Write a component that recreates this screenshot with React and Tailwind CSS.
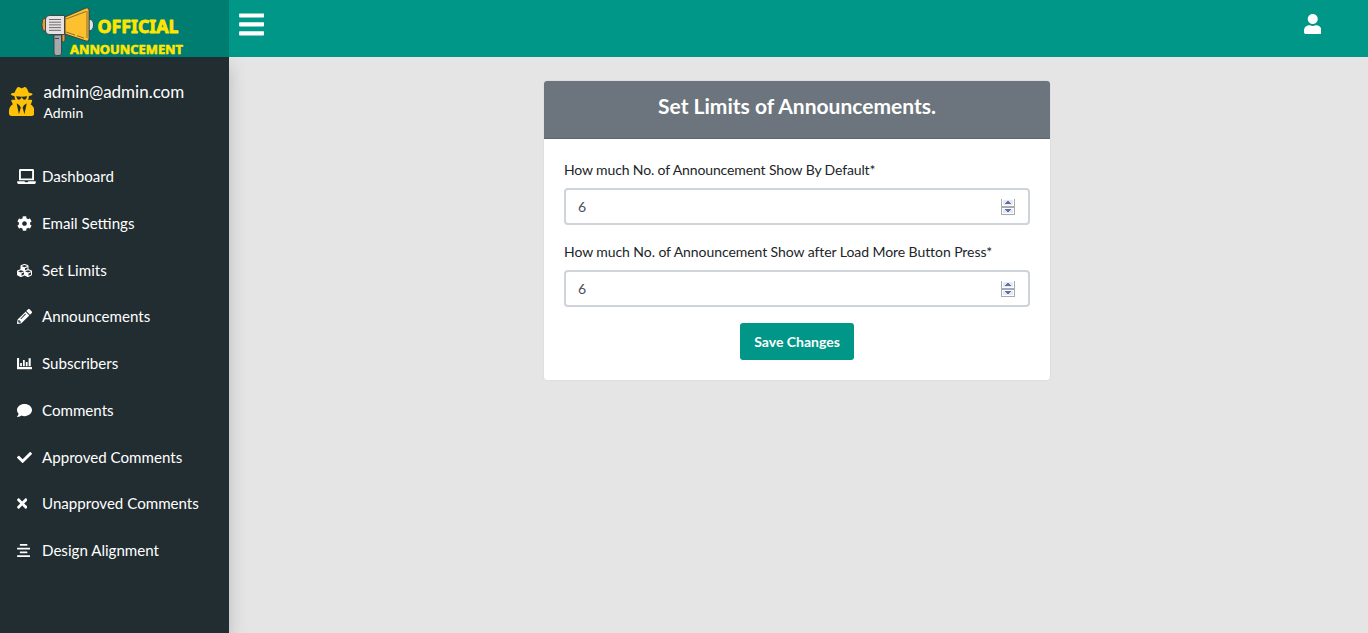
import React from "react";
import {
  FaLaptop, FaCog, FaCubes, FaPencilAlt, FaComment, FaCheck,
  FaTimes, FaAlignCenter, FaBars, FaUser, FaUserSecret,
} from "react-icons/fa";

function BarChart({ className }) {
  return (
    <svg viewBox="0 0 512 512" fill="currentColor" className={className}>
      <path d="M12 64H60Q72 64 72 76V376H500Q512 376 512 388V436Q512 448 500 448H12Q0 448 0 436V76Q0 64 12 64Z" />
      <path d="M108 236H168V346H108ZM204 140H264V346H204ZM300 204H360V346H300ZM396 76H468V346H396Z" />
    </svg>
  );
}

const items = [
  { label: "Dashboard", Icon: FaLaptop, size: "w-[19px]" },
  { label: "Email Settings", Icon: FaCog, size: "w-[15px]" },
  { label: "Set Limits", Icon: FaCubes, size: "w-[15px]" },
  { label: "Announcements", Icon: FaPencilAlt, size: "w-[15px]" },
  { label: "Subscribers", Icon: BarChart, size: "w-[15px]" },
  { label: "Comments", Icon: FaComment, size: "w-[15px]" },
  { label: "Approved Comments", Icon: FaCheck, size: "w-[15px]" },
  { label: "Unapproved Comments", Icon: FaTimes, size: "w-[10.4px]" },
  { label: "Design Alignment", Icon: FaAlignCenter, size: "w-[13.2px]" },
];

function Megaphone() {
  return (
    <svg width="54" height="50" viewBox="0 0 54 50" className="shrink-0" stroke="#3f3b3c" strokeWidth="0.9" strokeLinejoin="round">
      <path d="M6 11.5H3Q1 12 1 17.500Q1 23 3 24H6Z" fill="#e0a33c" />
      <path d="M21 27H24V34Q22 36 21 34Z" fill="#e0a33c" />
      <path d="M13 28H20.500V46Q20.500 48.500 18 48.500H15.500Q13 48.500 13 46Z" fill="#a4a9ad" />
      <path d="M14 31.500H18" fill="none" />
      <path d="M48 12Q52.500 12.500 52.500 18Q52.500 23.500 48 24Z" fill="#cdeaf5" />
      <path d="M24 10L45 1Q48 0 48 3V32Q48 35 45 34L24 27Z" fill="#fdc02f" />
      <path d="M25 12L45 4.500M25 25L34 28M36 28.700L43 31M46 4V31" fill="none" strokeWidth="0.6" />
      <path d="M9 8.500H23.500V27.500H9Q4.500 27.500 4.500 23V13Q4.500 8.500 9 8.500Z" fill="#e6e2e3" />
      <path d="M8 12.500H20M8 15.200H20M8 17.900H20M8 20.600H20M8 23.300H20" fill="none" stroke="#6d696a" strokeWidth="1" />
    </svg>
  );
}

function Logo() {
  return (
    <div className="flex h-[57px] w-[229px] shrink-0 bg-[#007d71] pl-[40.5px] pt-[7px]">
      <Megaphone />
      <svg
        width="116" height="50" viewBox="0 0 116 50" fill="#ffe600" stroke="#ffe600" strokeLinejoin="round"
        className="-ml-[26px] shrink-0 font-['Noto_Sans',sans-serif] font-bold"
      >
        <text x="28.500" y="25.700" fontSize="17.500" strokeWidth="0.8" textLength="81" lengthAdjust="spacingAndGlyphs">OFFICIAL</text>
        <text x="1" y="46.500" fontSize="12.300" strokeWidth="0.6" textLength="113" lengthAdjust="spacingAndGlyphs">ANNOUNCEMENT</text>
      </svg>
    </div>
  );
}

function Spinner() {
  return (
    <svg width="14" height="16" viewBox="0 0 14 16" shapeRendering="crispEdges" className="mt-px">
      <path d="M0 0H14V16H0Z" fill="#a9a9b1" />
      <path d="M1 0H13V7H1ZM1 9H13V15H1Z" fill="#fff" />
      <path d="M2 1H12V6H2ZM2 10H12V14H2Z" fill="#e9e9ed" />
      <path d="M6 2H8V3H9V4H10V5H4V4H5V3H6ZM4 10H10V11H9V12H8V13H6V12H5V11H4Z" fill="#5b6fb5" />
    </svg>
  );
}

function Field({ label, tracking }) {
  return (
    <div className="mb-4">
      <div className={"mb-2 h-[21px] whitespace-nowrap text-[14px] leading-[21px] text-[#212529] " + tracking}>{label}</div>
      <div className="flex h-[37px] items-center justify-between rounded-[4px] border-2 border-[#ced4da] bg-white pl-3 pr-[13px] text-[14px] text-[#495057]">
        <span>6</span>
        <Spinner />
      </div>
    </div>
  );
}

export default function App() {
  return (
    <div className="flex h-[633px] flex-col overflow-hidden bg-[#e5e5e5] font-[Lato,sans-serif]">
      <header className="relative z-10 flex h-[57px] shrink-0 bg-[#009688] text-white">
        <Logo />
        <div className="flex flex-1 items-start justify-between pl-[10px] pr-[47px]">
          <FaBars className="mt-[10px] h-[28.800px] w-[25.200px]" />
          <FaUser className="mt-[14px] h-[20px] w-[17.500px]" />
        </div>
      </header>
      <div className="flex min-h-0 flex-1">
        <aside className="w-[229px] shrink-0 bg-[#222d32] text-white shadow-[0_8px_17px_rgba(0,0,0,0.2)]">
          <div className="flex h-[96.2px] pl-[9px] pt-[24px]">
            <FaUserSecret className="mt-[6px] h-[29px] w-[25.400px] text-[#ffc107]" />
            <div className="ml-[9px]">
              <p className="text-[17px] leading-[22px]">admin@admin.com</p>
              <p className="text-[14px] leading-[19px]">Admin</p>
            </div>
          </div>
          <nav>
            {items.map(({ label, Icon, size }) => (
              <a key={label} className="flex h-[46.750px] items-center pl-[17px]">
                <span className="flex w-[25px] shrink-0">
                  <Icon className={"h-[15px] " + size} />
                </span>
                <span className="whitespace-nowrap text-[15.120px] leading-[23px]">{label}</span>
              </a>
            ))}
          </nav>
        </aside>
        <main className="flex min-w-0 flex-1 items-start pl-[314px] pt-[23px]">
          <section className="w-[508px] rounded-[4px] border border-[#dedede] bg-white">
            <h1 className="h-[58px] rounded-t-[3px] border-b border-[#5e666e] bg-[#6c757d] pt-3 text-center text-[21px] font-bold leading-[26px] text-white">
              Set Limits of Announcements.
            </h1>
            <div className="h-[241px] px-5 pt-5">
              <Field label="How much No. of Announcement Show By Default*" tracking="tracking-[-0.130px]" />
              <Field label="How much No. of Announcement Show after Load More Button Press*" tracking="tracking-[-0.070px]" />
              <div className="flex justify-center">
                <button className="h-[37px] w-[114px] rounded-[3px] bg-[#009688] text-[14px] font-bold text-white">
                  Save Changes
                </button>
              </div>
            </div>
          </section>
        </main>
      </div>
    </div>
  );
}
